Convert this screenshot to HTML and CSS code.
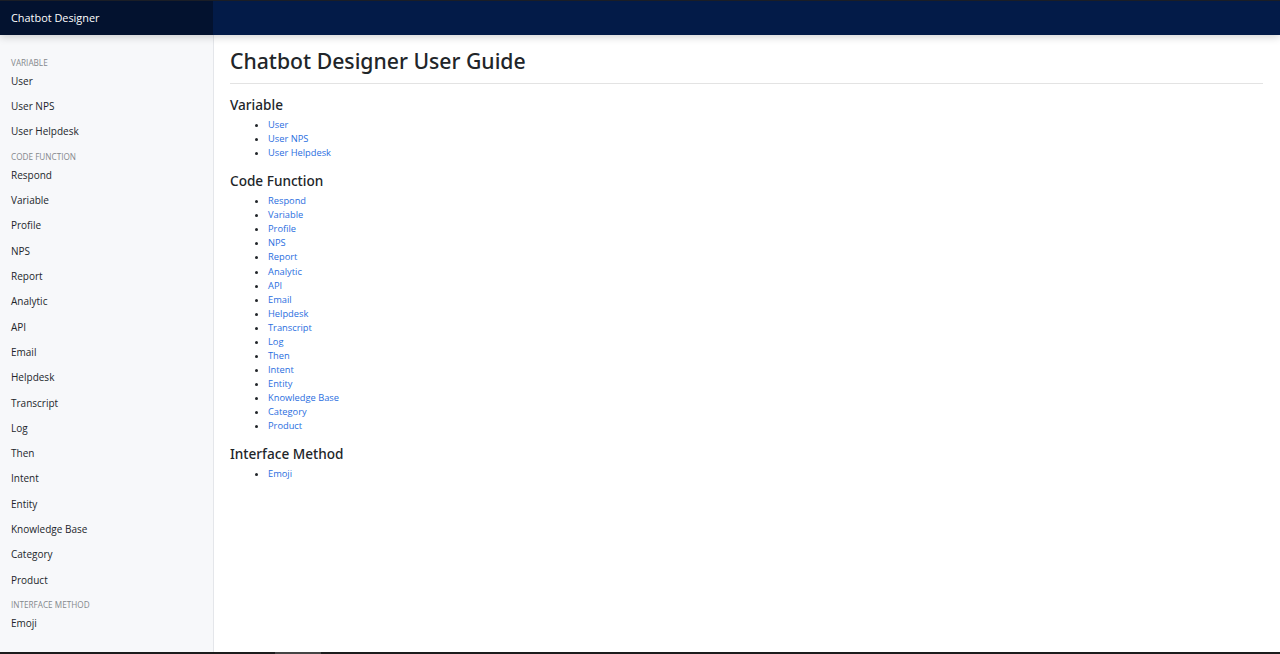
FILE: index.html
```html
<!DOCTYPE html>
<html lang="en">
<head>
<meta charset="utf-8">
<title>Chatbot Designer User Guide</title>
<link rel="stylesheet" href="styles.css">
</head>
<body>
<div class="app">
  <header class="topbar">
    <div class="brand">Chatbot Designer</div>
    <div class="topbar-fill"></div>
  </header>
  <div class="layout">
    <nav class="sidebar">
      <div class="nav-label">Variable</div>
      <a class="nav-item" href="#user">User</a>
      <a class="nav-item" href="#user-nps">User NPS</a>
      <a class="nav-item" href="#user-helpdesk">User Helpdesk</a>
      <div class="nav-label">Code Function</div>
      <a class="nav-item" href="#respond">Respond</a>
      <a class="nav-item" href="#variable">Variable</a>
      <a class="nav-item" href="#profile">Profile</a>
      <a class="nav-item" href="#nps">NPS</a>
      <a class="nav-item" href="#report">Report</a>
      <a class="nav-item" href="#analytic">Analytic</a>
      <a class="nav-item" href="#api">API</a>
      <a class="nav-item" href="#email">Email</a>
      <a class="nav-item" href="#helpdesk">Helpdesk</a>
      <a class="nav-item" href="#transcript">Transcript</a>
      <a class="nav-item" href="#log">Log</a>
      <a class="nav-item" href="#then">Then</a>
      <a class="nav-item" href="#intent">Intent</a>
      <a class="nav-item" href="#entity">Entity</a>
      <a class="nav-item" href="#knowledge-base">Knowledge Base</a>
      <a class="nav-item" href="#category">Category</a>
      <a class="nav-item" href="#product">Product</a>
      <div class="nav-label">Interface Method</div>
      <a class="nav-item" href="#emoji">Emoji</a>
    </nav>
    <main class="content">
      <h1 class="page-title">Chatbot Designer User Guide</h1>
      <h2 class="section-title">Variable</h2>
      <ul class="link-list">
        <li><a href="#user">User</a></li>
        <li><a href="#user-nps">User NPS</a></li>
        <li><a href="#user-helpdesk">User Helpdesk</a></li>
      </ul>
      <h2 class="section-title">Code Function</h2>
      <ul class="link-list">
        <li><a href="#respond">Respond</a></li>
        <li><a href="#variable">Variable</a></li>
        <li><a href="#profile">Profile</a></li>
        <li><a href="#nps">NPS</a></li>
        <li><a href="#report">Report</a></li>
        <li><a href="#analytic">Analytic</a></li>
        <li><a href="#api">API</a></li>
        <li><a href="#email">Email</a></li>
        <li><a href="#helpdesk">Helpdesk</a></li>
        <li><a href="#transcript">Transcript</a></li>
        <li><a href="#log">Log</a></li>
        <li><a href="#then">Then</a></li>
        <li><a href="#intent">Intent</a></li>
        <li><a href="#entity">Entity</a></li>
        <li><a href="#knowledge-base">Knowledge Base</a></li>
        <li><a href="#category">Category</a></li>
        <li><a href="#product">Product</a></li>
      </ul>
      <h2 class="section-title">Interface Method</h2>
      <ul class="link-list">
        <li><a href="#emoji">Emoji</a></li>
      </ul>
    </main>
  </div>
  <div class="screen-edge"><span class="screen-thumb"></span></div>
</div>
</body>
</html>
```

FILE: styles.css
```css
* { box-sizing: border-box; }

html, body {
  margin: 0;
  padding: 0;
  height: 100%;
}

body {
  font-family: "Open Sans", "Noto Sans", "Liberation Sans", sans-serif;
  color: #212529;
  background: #ffffff;
  overflow: hidden;
}

.app {
  display: flex;
  flex-direction: column;
  height: 654px;
}

.topbar {
  display: flex;
  height: 35px;
  flex: 0 0 35px;
  border-top: 1px solid #1b1e26;
  background: #031b48;
  box-shadow: 0 2px 8px rgba(0, 0, 0, 0.18);
  position: relative;
  z-index: 2;
}

.brand {
  width: 213px;
  background: #03122f;
  color: #ffffff;
  font-size: 10.9px;
  line-height: 34px;
  padding-left: 11px;
}

.topbar-fill { flex: 1; }

.layout {
  flex: 1;
  display: flex;
  min-height: 0;
}

.sidebar {
  width: 214px;
  flex: 0 0 214px;
  background: #f7f8fa;
  border-right: 1px solid #e4e6ea;
  padding-top: 15px;
  display: flex;
  flex-direction: column;
}

.nav-label {
  font-size: 8.2px;
  text-transform: uppercase;
  color: #85888d;
  line-height: 13px;
  padding: 5.5px 11px 0;
}

.nav-item {
  display: block;
  font-size: 10px;
  color: #23262b;
  text-decoration: none;
  line-height: 13.3px;
  padding: 6px 11px;
}

.content {
  flex: 1;
  padding: 13px 17px 0 16px;
}

.page-title {
  margin: 0;
  font-family: "Noto Sans", "Open Sans", sans-serif;
  font-size: 21.2px;
  font-weight: 500;
  line-height: 26px;
  padding-bottom: 9px;
  border-bottom: 1px solid #e3e3e3;
  color: #212529;
}

.section-title {
  margin: 12px 0 4px;
  font-family: "Noto Sans", "Open Sans", sans-serif;
  font-size: 13.6px;
  font-weight: 500;
  line-height: 18px;
  color: #212529;
}

.link-list {
  margin: 0 0 1px;
  padding-left: 38px;
  font-size: 9.3px;
  line-height: 14.06px;
}

.link-list li::marker {
  color: #212529;
  font-size: 9px;
}

.link-list a {
  color: #2a6ee0;
  text-decoration: none;
}

.screen-edge {
  height: 2px;
  flex: 0 0 2px;
  background: #1c1c1c;
  display: flex;
}

.screen-thumb {
  margin-left: 275px;
  width: 46px;
  background: #454545;
}
```
